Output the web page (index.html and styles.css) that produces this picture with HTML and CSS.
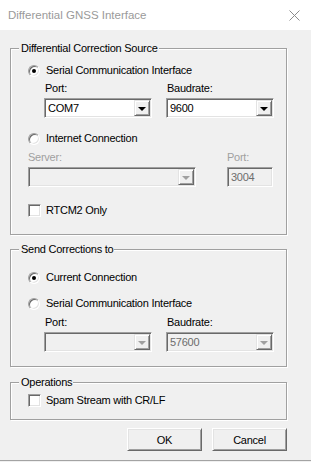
FILE: index.html
```html
<!DOCTYPE html>
<html>
<head>
<meta charset="utf-8">
<link rel="stylesheet" href="styles.css">
</head>
<body>
<div class="window">
  <div class="titlebar">
    <span class="title">Differential GNSS Interface</span>
    <svg class="close" width="11" height="11" viewBox="0 0 11 11"><path d="M0.5 0.5 L10.5 10.5 M10.5 0.5 L0.5 10.5" stroke="#8c8c8c" stroke-width="1" fill="none"/></svg>
  </div>
  <div class="client">
    <div class="group g1">
      <span class="legend">Differential Correction Source</span>
      <div class="opt o-first"><span class="radio checked"></span><span>Serial Communication Interface</span></div>
      <div class="pair p1">
        <div class="field"><span class="lbl">Port:</span><div class="combo"><span class="val">COM7</span><span class="drop"><i></i></span></div></div>
        <div class="field"><span class="lbl">Baudrate:</span><div class="combo"><span class="val">9600</span><span class="drop"><i></i></span></div></div>
      </div>
      <div class="opt o-inet"><span class="radio"></span><span>Internet Connection</span></div>
      <div class="server">
        <div class="field"><span class="lbl dis">Server:</span><div class="combo wide disabled"><span class="val"></span><span class="drop"><i></i></span></div></div>
        <div class="field port"><span class="lbl dis">Port:</span><div class="edit disabled"><span class="val">3004</span></div></div>
      </div>
      <div class="opt o-check"><span class="check"></span><span>RTCM2 Only</span></div>
    </div>

    <div class="group g2">
      <span class="legend">Send Corrections to</span>
      <div class="opt o-cur"><span class="radio checked"></span><span>Current Connection</span></div>
      <div class="opt o-ser2"><span class="radio"></span><span>Serial Communication Interface</span></div>
      <div class="pair p2">
        <div class="field"><span class="lbl">Port:</span><div class="combo disabled"><span class="val"></span><span class="drop"><i></i></span></div></div>
        <div class="field"><span class="lbl">Baudrate:</span><div class="combo disabled"><span class="val">57600</span><span class="drop"><i></i></span></div></div>
      </div>
    </div>

    <div class="group g3">
      <span class="legend">Operations</span>
      <div class="opt o-spam"><span class="check"></span><span>Spam Stream with CR/LF</span></div>
    </div>

    <div class="buttons">
      <button class="btn">OK</button>
      <button class="btn">Cancel</button>
    </div>
  </div>
</div>
</body>
</html>
```

FILE: styles.css
```css
* { box-sizing: border-box; }
html, body { margin: 0; padding: 0; }
body {
  width: 311px;
  height: 462px;
  background: #f0f0f0;
  font-family: "Liberation Sans", Arial, sans-serif;
  font-size: 11px;
  letter-spacing: -0.25px;
  color: #000;
  overflow: hidden;
}
.window {
  height: 461px;
  border-bottom: 1px solid #a3a3a3;
  display: flex;
  flex-direction: column;
}
.titlebar {
  height: 30px;
  background: #fff;
  display: flex;
  align-items: center;
  justify-content: space-between;
  padding: 0 11px 0 8px;
}
.title {
  font-size: 11.5px;
  letter-spacing: 0;
  color: #9a9a9a;
}
.close { display: block; }
.client {
  padding: 18px 24px 0 10px;
  display: flex;
  flex-direction: column;
}
.group {
  position: relative;
  border: 1px solid #a0a0a0;
  box-shadow: 1px 1px 0 #fff, inset 1px 1px 0 #fff;
  padding-left: 17px;
  display: flex;
  flex-direction: column;
  align-items: flex-start;
}
.legend {
  position: absolute;
  top: -7px;
  left: 8px;
  line-height: 13px;
  padding: 0 1px 0 2px;
  background: #f0f0f0;
}
.g1 { height: 187px; padding-top: 15px; }
.g2 { height: 118px; margin-top: 14px; padding-top: 21px; }
.g3 { height: 38px; margin-top: 15px; padding-top: 11px; }

.opt {
  display: flex;
  align-items: center;
  height: 13px;
  line-height: 13px;
}
.radio {
  width: 12px;
  height: 12px;
  border-radius: 50%;
  border: 1px solid;
  border-color: #a0a0a0 #fff #fff #a0a0a0;
  box-shadow: inset 1px 1px 0 #696969, inset -1px -1px 0 #e3e3e3;
  background: #fff;
  margin-right: 6px;
  position: relative;
  flex: none;
}
.radio.checked::after {
  content: "";
  position: absolute;
  left: 3px;
  top: 3px;
  width: 4px;
  height: 4px;
  border-radius: 50%;
  background: #000;
}
.check {
  width: 13px;
  height: 13px;
  border: 1px solid;
  border-color: #a0a0a0 #fff #fff #a0a0a0;
  box-shadow: inset 1px 1px 0 #696969, inset -1px -1px 0 #e3e3e3;
  background: #fff;
  margin-right: 5px;
  flex: none;
}
.o-inet { margin-top: 14px; }
.o-check { margin-top: 17px; }
.o-ser2 { margin-top: 13px; }

.pair {
  display: flex;
  gap: 14px;
  margin-left: 16px;
}
.p1 { margin-top: 5px; }
.p2 { margin-top: 6px; }
.field {
  display: flex;
  flex-direction: column;
}
.lbl {
  line-height: 13px;
  height: 13px;
  margin: 0 0 3px 1px;
}
.lbl.dis { color: #a0a0a0; margin-left: 0; }

.server {
  display: flex;
  gap: 31px;
  margin-top: 6px;
}

.combo, .edit {
  width: 108px;
  height: 20px;
  border: 1px solid;
  border-color: #a0a0a0 #fff #fff #a0a0a0;
  box-shadow: inset 1px 1px 0 #696969, inset -1px -1px 0 #e3e3e3;
  background: #fff;
  padding: 1px;
  display: flex;
  align-items: center;
}
.combo.wide { width: 168px; }
.edit { width: 46px; }
.val {
  flex: 1;
  padding-left: 2px;
  line-height: 16px;
}
.disabled { background: #f0f0f0; }
.disabled .val { color: #6d6d6d; }
.drop {
  width: 16px;
  height: 16px;
  background: #f0f0f0;
  border: 1px solid;
  border-color: #e3e3e3 #696969 #696969 #e3e3e3;
  box-shadow: inset 1px 1px 0 #fff, inset -1px -1px 0 #a0a0a0;
  display: flex;
  align-items: center;
  justify-content: center;
  flex: none;
}
.drop i {
  width: 0;
  height: 0;
  border-left: 4px solid transparent;
  border-right: 4px solid transparent;
  border-top: 4px solid #000;
  margin-top: 1px;
}
.disabled .drop i { border-top-color: #a0a0a0; }

.buttons {
  display: flex;
  justify-content: flex-end;
  gap: 10px;
  margin-top: 8px;
}
.btn {
  width: 75px;
  height: 23px;
  margin: 0;
  padding: 0;
  font-family: inherit;
  font-size: 11px;
  letter-spacing: -0.25px;
  color: #000;
  background: #f0f0f0;
  border: 1px solid;
  border-color: #fff #696969 #696969 #fff;
  box-shadow: inset 1px 1px 0 #e3e3e3, inset -1px -1px 0 #a0a0a0;
}
```
